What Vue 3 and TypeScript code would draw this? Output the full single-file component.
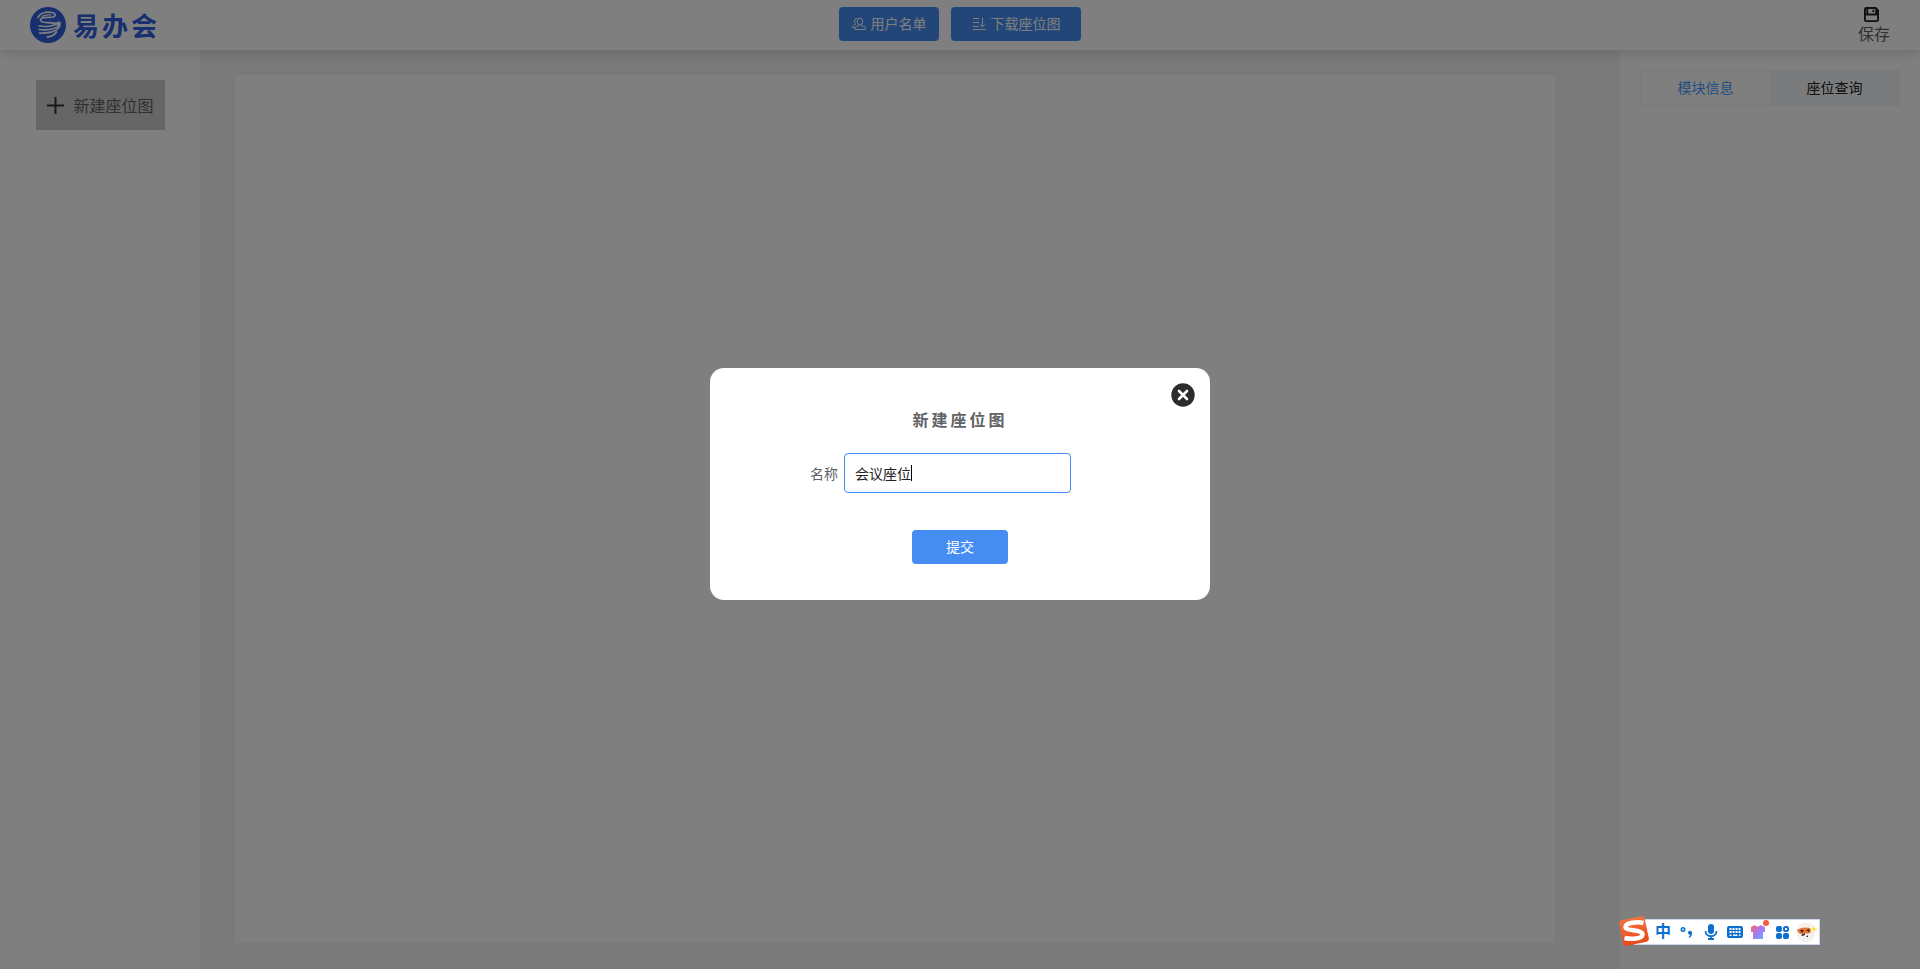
<script setup lang="ts">
import { computed, ref } from 'vue'

const name = ref('会议座位')
const activeTab = ref('module')
const dialogOpen = ref(true)
const tabs = [
  { id: 'module', label: '模块信息' },
  { id: 'seat', label: '座位查询' },
]
const caretStyle = computed(() => ({ left: `${11 + name.value.length * 14}px` }))
</script>

<template>
  <div class="page">
    <header class="header">
      <a class="brand" href="#">
        <svg class="brand-mark" viewBox="0 0 36 36" aria-hidden="true">
          <circle cx="18" cy="18" r="18" fill="#2e5fdc" />
          <g fill="none" stroke="#fff" stroke-linecap="round" stroke-linejoin="round">
            <path d="M8 10.500c2-4.500 8-6 14-5c4 .700 4 3.500 1 4.500c-4 1-8-.500-11.500 1.500c-2.500 2 0 4 4 4c5 .200 10 0 12 1.500" stroke-width="1.700" />
            <path d="M12 9.500c3-1.800 6-1.800 9-1.500" stroke-width="1.200" />
            <path d="M9 19c8 1 16 0 19.500-4c1.500 5-6 9-19.500 7.500" stroke-width="1.600" />
            <path d="M30 15.500c.500 6-5 11-20.500 10.500" stroke-width="1.700" />
            <path d="M26.500 25c-2 3-5 4.500-9 5" stroke-width="1.800" />
          </g>
        </svg>
        <span class="brand-name"><span>易</span><span>办</span><span>会</span></span>
      </a>
      <div class="actions">
        <button class="primary" type="button">
          <svg class="icon" viewBox="0 0 14 14" aria-hidden="true">
            <g fill="none" stroke="currentColor" stroke-linejoin="round">
              <ellipse cx="8" cy="4.500" rx="2.700" ry="3.500" />
              <path d="M6.500 7.500v1.200c-1.500.600-3.500.800-3.500 2.500v1.300h10.500v-1.300c0-1.700-2.500-1.900-4-2.500v-1.200" />
              <path d="M5 1.500c-1.700-.300-2.500.800-2.500 2.500c0 1.300.400 2 1 2.700v.800c-1.200.500-3 .700-3 2.300v.700h2.500" />
            </g>
          </svg>
          <span>用户名单</span>
        </button>
        <button class="primary wide" type="button">
          <svg class="icon" viewBox="0 0 14 14" aria-hidden="true">
            <path d="M1 1.500h6M1 5.500h6M1 9.500h6M.500 12.500h13M10.500 1v9M8 7.500l2.500 2.500l2.500-2.500" fill="none" stroke="currentColor" />
          </svg>
          <span>下载座位图</span>
        </button>
      </div>
      <button class="save" type="button">
        <svg class="save-icon" viewBox="0 0 16 16" aria-hidden="true">
          <path d="M2.500 1h10l2.500 2.500v10a1.500 1.500 0 0 1-1.500 1.500h-11a1.500 1.500 0 0 1-1.500-1.500v-11a1.500 1.500 0 0 1 1.500-1.500zM1 8h14M3.500 1v6M13 1.500v6" fill="none" stroke="#222" stroke-width="2" />
          <path d="M9 3h2v2.500h-2z" fill="#222" />
        </svg>
        <span>保存</span>
      </button>
    </header>

    <main class="workspace">
      <aside class="sidebar">
        <button class="create" type="button" @click="dialogOpen = true">
          <svg class="plus" viewBox="0 0 17 17" aria-hidden="true">
            <path d="M8.500 0v17M0 8.500h17" stroke="#303133" stroke-width="2" />
          </svg>
          <span>新建座位图</span>
        </button>
      </aside>
      <section class="stage"><div class="canvas"></div></section>
      <aside class="inspector">
        <div class="tabs" role="tablist">
          <button
            v-for="tab in tabs"
            :key="tab.id"
            class="tab"
            :class="{ active: tab.id === activeTab }"
            type="button"
            role="tab"
            :aria-selected="tab.id === activeTab"
            @click="activeTab = tab.id"
          >{{ tab.label }}</button>
        </div>
      </aside>
    </main>

    <div v-if="dialogOpen" class="mask">
      <form class="dialog" role="dialog" aria-labelledby="dialog-title" @submit.prevent="dialogOpen = false">
        <button class="close" type="button" aria-label="关闭" @click="dialogOpen = false">
          <svg viewBox="0 0 24 24" aria-hidden="true">
            <circle cx="12" cy="12" r="11.700" fill="#2c2c2c" />
            <path d="M8 8l8 8M16 8l-8 8" stroke="#fff" stroke-width="2.600" stroke-linecap="round" />
          </svg>
        </button>
        <h2 id="dialog-title" class="title">新建座位图</h2>
        <div class="field">
          <label for="seat-name">名称</label>
          <div class="control">
            <input id="seat-name" v-model="name" type="text" autocomplete="off" />
            <span class="caret" :style="caretStyle"></span>
          </div>
        </div>
        <button class="primary submit" type="submit">提交</button>
      </form>
    </div>

    <div class="ime">
      <svg class="ime-logo" viewBox="0 0 32 32" aria-hidden="true">
        <defs>
          <linearGradient id="ime-red" x1="0" y1="0" x2="0" y2="1">
            <stop offset="0" stop-color="#f4713f" />
            <stop offset="1" stop-color="#ea4a14" />
          </linearGradient>
        </defs>
        <rect x="3" y="3" width="26" height="26" rx="3" fill="url(#ime-red)" transform="rotate(-12 16 16)" />
        <path d="M25.500 8c-6-1.500-18-.500-18 4c0 4.500 17 2 17 7.500c0 4.500-11 5-18 3.500" fill="none" stroke="#fff" stroke-width="4.500" />
      </svg>
      <span class="ime-lang">中</span>
      <svg class="ime-icon" viewBox="0 0 16 16" aria-hidden="true">
        <circle cx="4" cy="5.500" r="1.700" fill="none" stroke="#0b6fd0" stroke-width="1.600" />
        <path d="M9 8.500a2 2 0 1 1 4 .500c0 2.500-1 4.500-3 5l-.500-1c1-.400 1.500-1.200 1.600-2.200c-1.200 0-2.100-1-2.100-2.300z" fill="#0b6fd0" />
      </svg>
      <svg class="ime-icon" viewBox="0 0 16 16" aria-hidden="true">
        <rect x="5" y="0" width="6" height="10" rx="3" fill="#0b6fd0" />
        <path d="M2.500 7c0 7 11 7 11 0M8 12v3M5 15h6" fill="none" stroke="#0b6fd0" stroke-width="1.800" />
      </svg>
      <svg class="ime-icon" viewBox="0 0 16 16" aria-hidden="true">
        <rect x="0" y="2" width="16" height="12" rx="2" fill="#0b6fd0" />
        <path d="M2.500 5h11M2.500 8h11" stroke="#fff" stroke-width="1.800" stroke-dasharray="2 1" />
        <path d="M2.500 11.300h2M6 11.300h4.500M12 11.300h1.500" stroke="#fff" stroke-width="1.500" />
      </svg>
      <svg class="ime-icon shirt" viewBox="0 0 20 20" aria-hidden="true">
        <defs>
          <linearGradient id="ime-shirt" x1="0" y1="0" x2="1" y2="1">
            <stop offset="0" stop-color="#ff655d" />
            <stop offset=".5" stop-color="#a779f3" />
            <stop offset="1" stop-color="#5cb6ff" />
          </linearGradient>
        </defs>
        <path d="M2 7l4-2c1 2 4 2 5 0l5 2v5h-2v7h-10v-7h-2z" fill="url(#ime-shirt)" />
        <circle cx="17" cy="3" r="3" fill="#f65b3b" />
      </svg>
      <svg class="ime-icon" viewBox="0 0 16 16" aria-hidden="true">
        <g fill="#0b6fd0">
          <rect x="1" y="2" width="6" height="6" rx="2" />
          <rect x="1" y="9" width="6" height="6" rx="2" />
          <rect x="8" y="9" width="6" height="6" rx="2" />
        </g>
        <rect x="9" y="3" width="4" height="4" rx="1.500" fill="none" stroke="#0b6fd0" stroke-width="2" />
      </svg>
      <svg class="ime-face" viewBox="0 0 22 22" aria-hidden="true">
        <path d="M2 6c1-4 4-2 5-4c2-1 4-1 6 0c2 0 4 1 4 4c3 3 3 9 0 12c-3 4-11 4-14 0c-3-3-3-8-1-12z" fill="#f5f1ef" />
        <path d="M1 9c4-3 9-3 13-2l1 4c-2 2-4 2-6 1c-3 2-7 1-8-3z" fill="#e8742f" />
        <path d="M4 9l4 0l-2 3zM10 9l4-1l-1 3zM5 14l4-2l0 2l-3 1zM10 16l2-2v2z" fill="#3b2420" />
        <path d="M18 4l1 3l3 1l-3 1l-1 3l-1-3l-3-1l3-1z" fill="#ffe05c" />
      </svg>
    </div>
  </div>
</template>

<style>
body {
  margin: 0;
}
</style>

<style scoped>
.page {
  display: flex;
  flex-direction: column;
  min-height: 100vh;
  background: #f4f4f4;
  color: #606266;
  font-family: "Liberation Sans", "Noto Sans CJK SC", sans-serif;
  font-size: 14px;
}

button {
  padding: 0;
  border: 0;
  background: none;
  color: inherit;
  font: inherit;
  cursor: pointer;
}

.header {
  position: relative;
  z-index: 1;
  display: grid;
  grid-template-columns: 1fr auto 1fr;
  box-sizing: border-box;
  height: 50px;
  padding: 0 30px;
  background: #fff;
  box-shadow: 0 5px 10px rgba(0, 0, 0, 0.12);
}

.brand {
  display: flex;
  align-items: center;
  justify-self: start;
  gap: 7px;
  text-decoration: none;
}

.brand-mark {
  width: 36px;
  height: 36px;
}

.brand-name {
  display: flex;
  gap: 3px;
  color: #2e5fdc;
  font-family: "Noto Sans CJK SC", sans-serif;
  font-size: 26px;
  font-weight: 700;
  line-height: 36px;
}

.actions {
  display: flex;
  gap: 12px;
  padding-top: 7px;
}

.primary {
  display: flex;
  align-items: center;
  justify-content: center;
  gap: 5px;
  width: 100px;
  height: 34px;
  border-radius: 4px;
  background: #468df2;
  color: #fff;
  line-height: 20px;
}

.wide {
  width: 130px;
}

.icon {
  width: 14px;
  height: 14px;
}

.save {
  display: flex;
  flex-direction: column;
  align-items: center;
  justify-self: end;
  gap: 1px;
  padding-top: 7px;
  font-size: 16px;
  line-height: 24px;
}

.save-icon {
  width: 15px;
  height: 15px;
  margin-right: 4px;
}

.workspace {
  display: flex;
  flex: 1;
}

.sidebar {
  box-sizing: border-box;
  width: 200px;
  padding: 30px 35px 30px 36px;
  background: #fff;
}

.create {
  display: flex;
  align-items: center;
  justify-content: center;
  gap: 9px;
  width: 100%;
  height: 50px;
  background: #ccc;
  font-size: 16px;
}

.plus {
  width: 17px;
  height: 17px;
}

.stage {
  display: flex;
  flex: 1;
  padding: 25px 65px 26px 35px;
}

.canvas {
  flex: 1;
  background: #fff;
}

.inspector {
  box-sizing: border-box;
  width: 300px;
  padding: 20px;
  background: #fff;
}

.tabs {
  display: flex;
  box-sizing: border-box;
  height: 36px;
  border: 1px solid #f0f2f5;
}

.tab {
  flex: 1;
  padding-bottom: 2px;
  background: #f5f7fa;
  color: #222;
}

.tab.active {
  background: #fff;
  color: #409eff;
}

.mask {
  position: fixed;
  inset: 0;
  z-index: 2;
  display: grid;
  place-items: center;
  padding-bottom: 1px;
  background: rgba(0, 0, 0, 0.5);
}

.dialog {
  position: relative;
  display: flex;
  flex-direction: column;
  align-items: center;
  box-sizing: border-box;
  width: 500px;
  padding: 41px 0 36px;
  border-radius: 14px;
  background: #fff;
}

.close {
  position: absolute;
  top: 15px;
  right: 15px;
  width: 24px;
  height: 24px;
}

.close svg {
  display: block;
}

.title {
  margin: 0 0 20px;
  font-size: 16px;
  font-weight: 700;
  letter-spacing: 3px;
  line-height: 24px;
}

.field {
  display: flex;
  align-items: center;
  align-self: stretch;
  gap: 6px;
  margin: 0 0 37px 100px;
}

.control {
  position: relative;
  width: 227px;
}

.control input {
  display: block;
  box-sizing: border-box;
  width: 100%;
  height: 40px;
  padding: 0 10px;
  border: 1px solid #468df2;
  border-radius: 4px;
  outline: none;
  background: #fff;
  color: #222;
  caret-color: transparent;
  font: inherit;
}

.caret {
  position: absolute;
  top: 12px;
  width: 1px;
  height: 16px;
  background: #000;
}

.submit {
  width: 96px;
}

.ime {
  position: fixed;
  right: 100px;
  bottom: 24px;
  z-index: 3;
  display: flex;
  align-items: center;
  gap: 8px;
  box-sizing: border-box;
  height: 26px;
  padding: 0 4px 0 20px;
  border: 1px solid #c9d6ea;
  background: #fff;
}

.ime-logo {
  position: absolute;
  top: -5px;
  left: -17px;
  width: 32px;
  height: 32px;
}

.ime-lang {
  color: #0b6fd0;
  font-size: 16px;
  font-weight: 700;
  line-height: 24px;
}

.ime-icon {
  width: 16px;
  height: 16px;
}

.shirt {
  width: 20px;
  height: 20px;
  margin: 0 -2px 4px;
}

.ime-face {
  width: 22px;
  height: 22px;
  margin: 0 -3px;
}
</style>
